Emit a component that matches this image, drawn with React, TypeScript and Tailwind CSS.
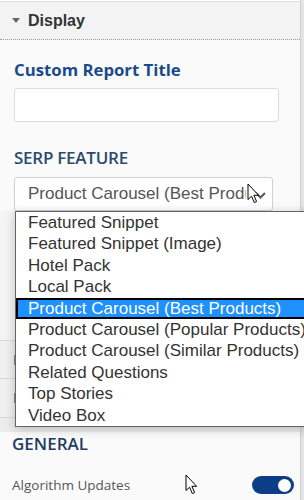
import React from "react";

const options = [
  "Featured Snippet",
  "Featured Snippet (Image)",
  "Hotel Pack",
  "Local Pack",
  "Product Carousel (Best Products)",
  "Product Carousel (Popular Products)",
  "Product Carousel (Similar Products)",
  "Related Questions",
  "Top Stories",
  "Video Box",
];

const selected = 4;

function Cursor({ className }: { className: string }) {
  return (
    <svg className={className} width="13" height="21" viewBox="0 0 13 21">
      <path
        d="M1 1 L1 16.5 L4.6 13.2 L7.3 19.6 L9.6 18.6 L6.9 12.3 L11.6 12.3 Z"
        fill="#fff"
        stroke="#000"
        strokeWidth="1"
        strokeLinejoin="round"
      />
    </svg>
  );
}

export default function App() {
  return (
    <div className="relative w-[304px] h-[500px] overflow-hidden bg-[#fafafa] flex">
      <div className="w-[300px] flex flex-col">
        <div className="h-[1px] bg-white" />
        <div className="h-[1px] bg-[#dcdcdc]" />
        <div className="h-[38px] bg-[#f3f3f3] border-b border-dotted border-[#9a9a9a] flex items-center pl-[12px] gap-[8px]">
          <svg width="8" height="5" viewBox="0 0 8 5">
            <path d="M0 0 L8 0 L4 5 Z" fill="#666" />
          </svg>
          <span className="font-['Liberation_Sans',Arial,sans-serif] font-bold text-[16px] text-[#333]">
            Display
          </span>
        </div>

        <div className="flex flex-col pl-[14px] font-['Open_Sans',sans-serif]">
          <div className="mt-[19px] text-[16.75px] leading-[22px] font-bold text-[#1a4a8a]">
            Custom Report Title
          </div>
          <div className="mt-[7px] w-[265px] h-[34px] bg-white border border-[#dcdcdc] rounded-[3px]" />

          <div className="mt-[24px] text-[17px] leading-[24px] font-semibold tracking-[-0.25px] text-[#2b4a6e]">
            SERP FEATURE
          </div>
          <div className="mt-[7px] w-[259px] h-[34px] bg-white border border-[#d0d0d0] rounded-[3px] flex items-center pl-[13px] pr-[26px] relative">
            <span className="block overflow-hidden whitespace-nowrap font-['Liberation_Sans',Arial,sans-serif] text-[17px] text-[#555]">
              Product Carousel (Best Produ
            </span>
            <svg
              className="absolute right-[6px] top-[14px]"
              width="11"
              height="7"
              viewBox="0 0 11 7"
            >
              <path d="M1 1 L5.5 5.5 L10 1" fill="none" stroke="#555" strokeWidth="2" />
            </svg>
          </div>
        </div>

        <div className="h-[221px] flex flex-col">
          <div className="h-[129px] bg-[#f4f4f4]" />
          <div className="h-[38px] border-t border-[#d8d8d8] bg-[#f0f0f0] flex items-center pl-[14px]">
            <div className="w-[1px] h-[10px] bg-[#888]" />
          </div>
          <div className="h-[39px] border-t border-[#d8d8d8] bg-[#f0f0f0] flex items-center pl-[14px]">
            <div className="w-[1px] h-[10px] bg-[#888]" />
          </div>
          <div className="flex-1 border-t border-[#d8d8d8] bg-[#ececec]" />
        </div>

        <div className="flex flex-col pl-[12px] pr-[6px] font-['Open_Sans',sans-serif]">
          <div className="text-[17px] leading-[24px] font-semibold text-[#1f3c62]">GENERAL</div>
          <div className="mt-[14px] h-[30px] flex items-center justify-between">
            <span className="text-[13.5px] text-[#555]">Algorithm Updates</span>
            <div className="w-[42px] h-[18px] rounded-full bg-[#0d3d87] flex items-center justify-end pr-[3px]">
              <div className="w-[13px] h-[13px] rounded-full bg-white" />
            </div>
          </div>
        </div>
      </div>
      <div className="w-[4px] bg-[#e4e4e4] border-l border-[#cfcfcf]" />

      <div className="absolute left-[15px] top-[211px] w-[300px] h-[216px] bg-white border border-[#646464] shadow-[0_2px_10px_rgba(0,0,0,0.22)] font-['Liberation_Sans',Arial,sans-serif] text-[17px]">
        {options.map((o, i) =>
          i === selected ? (
            <div
              key={o}
              className="h-[21.4px] leading-[17.4px] bg-[#1e90ff] border-2 border-black pl-[10px] text-white whitespace-nowrap"
            >
              {o}
            </div>
          ) : (
            <div key={o} className="h-[21.4px] leading-[21.4px] pl-[12px] text-[#333] whitespace-nowrap">
              {o}
            </div>
          )
        )}
      </div>

      <Cursor className="absolute left-[247px] top-[183px]" />
      <Cursor className="absolute left-[185px] top-[474px]" />
    </div>
  );
}
